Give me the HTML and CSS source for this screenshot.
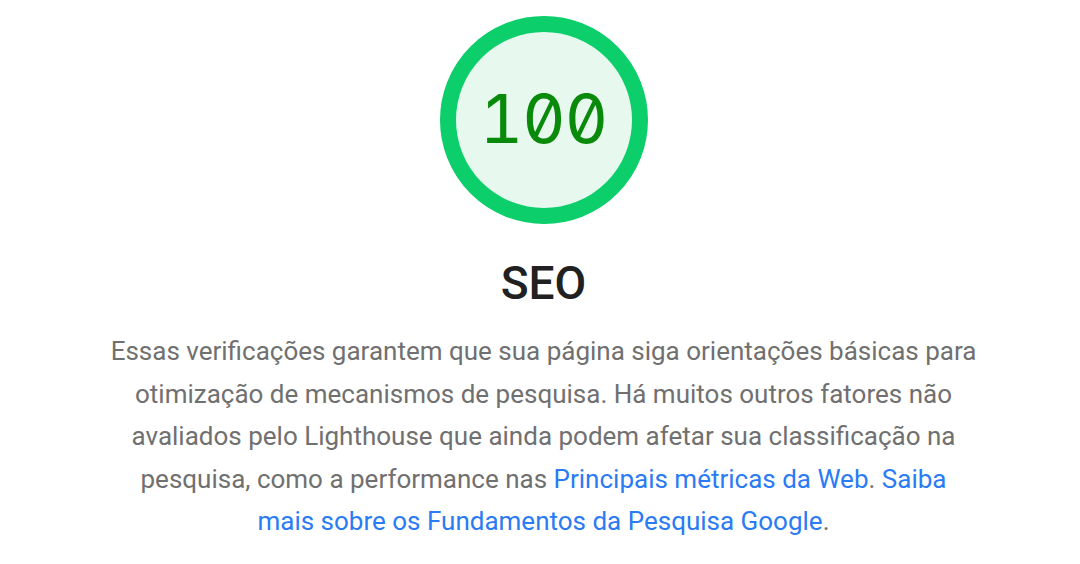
FILE: index.html
```html
<!DOCTYPE html>
<html lang="pt">
<head>
<meta charset="utf-8">
<link rel="stylesheet" href="styles.css">
</head>
<body>
<main class="header">
  <div class="gauge">
    <svg class="gauge-svg" viewBox="0 0 208 208" width="208" height="208">
      <circle cx="104" cy="104" r="96" fill="#e7f9ee" stroke="#0cce6b" stroke-width="16"/>
    </svg>
    <span class="gauge-value">100</span>
  </div>
  <h1 class="title">SEO</h1>
  <p class="desc">Essas verificações garantem que sua página siga orientações básicas para otimização de mecanismos de pesquisa. Há muitos outros fatores não avaliados pelo Lighthouse que ainda podem afetar sua classificação na pesquisa, como a performance nas <a class="link" href="#">Principais métricas da Web</a>. <a class="link" href="#">Saiba mais sobre os Fundamentos da Pesquisa Google</a>.</p>
</main>
</body>
</html>
```

FILE: styles.css
```css
html, body {
  margin: 0;
  padding: 0;
  background: #ffffff;
}
body {
  width: 1080px;
  height: 564px;
  overflow: hidden;
  font-family: Roboto, "Liberation Sans", sans-serif;
}
.header {
  display: flex;
  flex-direction: column;
  align-items: center;
  padding-top: 16px;
  padding-left: 7px;
}
.gauge {
  position: relative;
  width: 208px;
  height: 208px;
}
.gauge-svg {
  display: block;
}
.gauge-value {
  position: absolute;
  inset: 0;
  display: flex;
  align-items: center;
  justify-content: center;
  font-family: Inter, "DejaVu Sans Mono", monospace;
  font-feature-settings: "tnum" 1, "zero" 1;
  font-size: 67px;
  font-weight: 400;
  letter-spacing: -1px;
  color: #0a8a0a;
  padding-bottom: 4px;
}
.title {
  margin: 33px 0 0;
  font-size: 46px;
  font-weight: 500;
  color: #212121;
  line-height: 52px;
}
.desc {
  margin: 21px 0 0;
  width: 866px;
  text-align: center;
  font-size: 26px;
  line-height: 42.5px;
  color: #707070;
}
.link {
  color: #2a7bf4;
  text-decoration: none;
}
```
